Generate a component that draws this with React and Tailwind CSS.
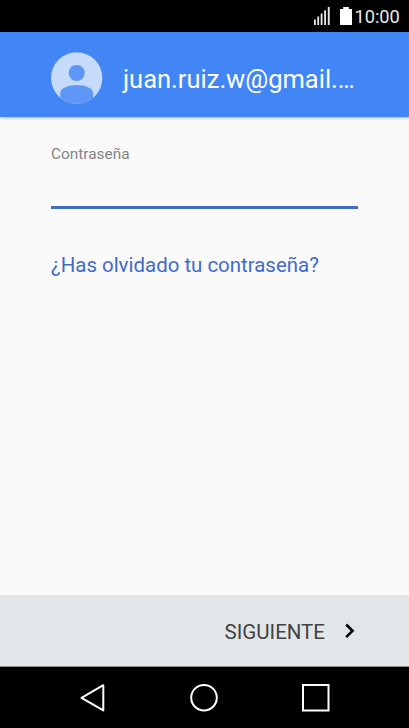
import React from "react";

const SignalIcon = () => (
  <svg className="w-4 h-[18px]" viewBox="0 0 16 18" fill="#e8e8e8">
    <rect x="0" y="12.5" width="1.8" height="5.5" />
    <rect x="3.3" y="9.5" width="1.8" height="8.5" />
    <rect x="6.7" y="6.5" width="1.8" height="11.5" />
    <rect x="10.2" y="3.3" width="1.8" height="14.7" />
    <rect x="13.8" y="0" width="1.9" height="18" />
  </svg>
);

const BatteryIcon = () => (
  <svg className="w-3 h-[18px]" viewBox="0 0 12 18" fill="#fff">
    <path d="M3.2 0h5.6v2H12v16H0V2h3.2z" />
  </svg>
);

const Avatar = () => (
  <svg className="w-[52px] h-[52px] shrink-0" viewBox="0 0 52 52">
    <defs>
      <clipPath id="avatar-clip">
        <circle cx="25.7" cy="26" r="25.7" />
      </clipPath>
    </defs>
    <g clipPath="url(#avatar-clip)">
      <rect width="52" height="52" fill="#c6dafc" />
      <circle cx="25.7" cy="21" r="8" fill="#5e97f6" />
      <path
        d="M9.2 52V41C9.2 36 17.700 33 25.700 33S42.200 36 42.200 41V52z"
        fill="#5e97f6"
      />
    </g>
  </svg>
);

const App = () => {
  return (
    <div className="flex h-screen w-full flex-col overflow-hidden bg-[#fafafa] font-[Roboto,sans-serif]">
      {/* Status bar */}
      <div className="flex h-8 shrink-0 items-center bg-black pl-[314px]">
        <SignalIcon />
        <div className="ml-2.5">
          <BatteryIcon />
        </div>
        <span className="ml-[2.500px] pt-0.5 text-[18.200px] leading-[30px] text-[#e8e8e8]">
          10:00
        </span>
      </div>

      {/* Account header */}
      <header className="z-10 flex h-[85px] shrink-0 items-center bg-[#4285f4] pt-[7px] pr-[51px] pl-[51px] shadow-[0_1px_3px_rgba(0,0,0,0.3)]">
        <Avatar />
        <h1 className="ml-5 pt-px text-[25.5px] leading-8 whitespace-nowrap text-white">
          juan.ruiz.w@gmail.…
        </h1>
      </header>

      {/* Password form */}
      <main className="flex-1 px-[51px] pt-[27px]">
        <label
          htmlFor="password"
          className="block text-[15.4px] leading-5 text-[#858585]"
        >
          Contraseña
        </label>
        <input
          id="password"
          type="password"
          className="block h-[45px] w-full border-b-3 border-[#3f6bc9] bg-transparent outline-none"
        />
        <a
          href="#"
          className="mt-[42px] block text-[20.45px] leading-7 whitespace-nowrap text-[#3f6bc9]"
        >
          ¿Has olvidado tu contraseña?
        </a>
      </main>

      {/* Footer action */}
      <footer className="flex h-[72px] shrink-0 items-center justify-end border-b border-[#8b8e90] bg-[#e2e6e9] pr-[53px]">
        <button className="flex items-center text-[20.5px] text-[#424242]">
          <span className="pt-0.5 leading-7">SIGUIENTE</span>
          <svg className="ml-[19px] h-4 w-3" viewBox="0 0 12 16" fill="none">
            <path
              d="M2.2 1.500L8.500 7.800L2.200 14.100"
              stroke="#000"
              strokeWidth="2.6"
            />
          </svg>
        </button>
      </footer>

      {/* Navigation bar */}
      <nav className="flex h-[61px] shrink-0 items-center bg-black pl-[79px]">
        <svg className="h-[30px] w-7" viewBox="0 0 28 30" fill="none">
          <path
            d="M2.500 14.800L24.300 2.200V27.400z"
            stroke="#fff"
            strokeWidth="2"
            strokeLinejoin="round"
          />
        </svg>
        <svg className="ml-[82px] h-[30px] w-[30px]" viewBox="0 0 30 30" fill="none">
          <circle cx="15" cy="14.700" r="12.800" stroke="#fff" strokeWidth="2" />
        </svg>
        <svg className="ml-[82px] h-[30px] w-[30px]" viewBox="0 0 30 30" fill="none">
          <rect x="2" y="2" width="25.500" height="25.500" stroke="#fff" strokeWidth="2" />
        </svg>
      </nav>
    </div>
  );
};

export default App;
